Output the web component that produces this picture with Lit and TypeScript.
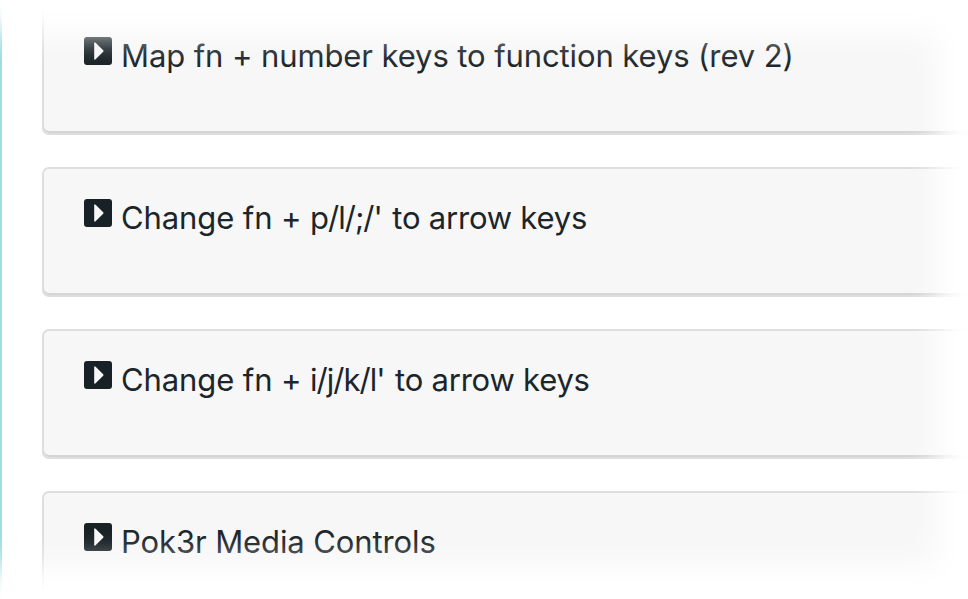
import { LitElement, html, css } from "lit";
import { customElement } from "lit/decorators.js";

@customElement("app-root")
export class AppRoot extends LitElement {
  static styles = css`
    :host { display: block; height: 599px; overflow: hidden; background: #fff; }
    .frame { position: relative; display: flex; height: 599px; overflow: hidden; }
    .rule { width: 2px; flex: none; background: #9fdce6; }
    .list { display: flex; flex-direction: column; gap: 32px; padding-left: 40px; margin-top: 5px; }
    .card { box-sizing: border-box; height: 130px; flex: none; width: 990px; background: #f7f7f7; border: 2px solid #dedede; border-radius: 7px; box-shadow: inset 0 -2px 0 #d5d5d5; padding: 30px 0 0 40px; display: flex; align-items: flex-start; gap: 9px; }
    .icon { width: 28px; height: 28px; flex: none; }
    .title { font: 31px/40px Inter, sans-serif; margin-top: -1px; letter-spacing: -0.1px; color: #1b252a; white-space: pre; }
    .keys { letter-spacing: -0.98px; margin-right: 2px; }
    .keys + .tail { letter-spacing: -0.22px; }
    .fade { position: absolute; inset: 0 -3px 0 -102px; pointer-events: none; box-shadow: inset 0 0 32px 33px #fff; }
  `;
  titles = [
    html`Map fn + number keys to function keys (rev 2)`,
    html`Change fn + <span class="keys">p/l/;/'</span><span class="tail"> to arrow keys</span>`,
    html`Change fn + <span class="keys">i/j/k/l'</span><span class="tail"> to arrow keys</span>`,
    html`Pok3r Media Controls`,
  ];
  render() {
    return html`<div class="frame"><div class="rule"></div><div class="list">${this.titles.map((t) => html`<div class="card">
      <svg class="icon" viewBox="0 0 28 28"><rect width="28" height="28" rx="3" fill="#172126"/><path d="M10.200 6.200Q10.200 4.400 11.600 5.800L19.200 13.300Q19.900 14 19.200 14.700L11.600 22.300Q10.200 23.600 10.200 21.800z" fill="#f7f7f7"/></svg>
      <span class="title">${t}</span></div>`)}</div><div class="fade"></div></div>`;
  }
}
